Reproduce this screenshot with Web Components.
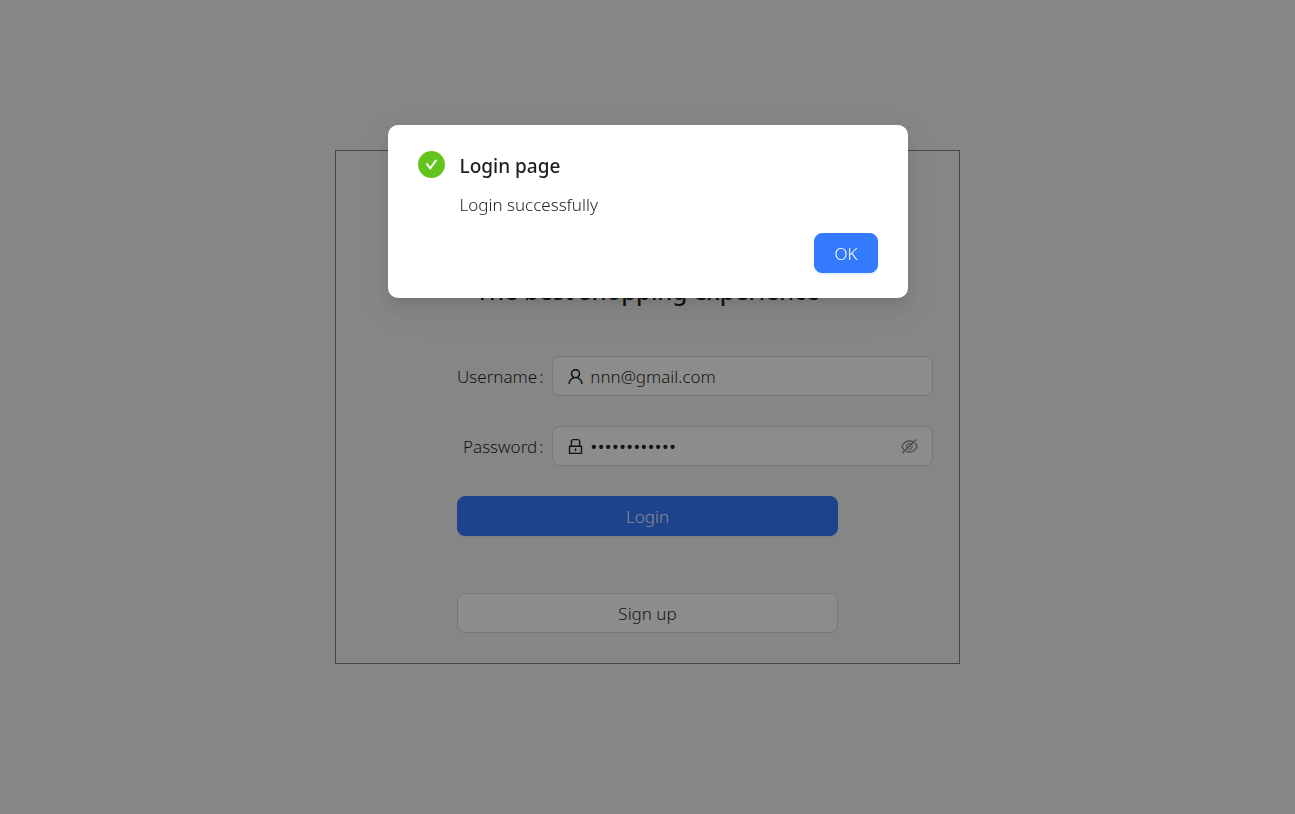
<!DOCTYPE html>
<html lang="en">
<head>
<meta charset="utf-8">
<meta name="viewport" content="width=device-width, initial-scale=1">
<title>Login page</title>
<style>
  body {
    margin: 0;
    background: #f5f5f5;
    color: rgba(0, 0, 0, 0.88);
    font: 300 17px/28px "Noto Sans", "Open Sans", sans-serif;
    --primary: #337aff;
    --line: #d9d9d9;
    --success: #62c41c;
  }
</style>
</head>
<body>
<login-page></login-page>

<script>
const ICONS = {
  user: '<path d="M858.5 763.6a374 374 0 00-80.6-119.5 375.63 375.63 0 00-119.5-80.6c-.4-.2-.8-.3-1.2-.5C719.5 518 760 444.7 760 362c0-137-111-248-248-248S264 225 264 362c0 82.7 40.5 156 102.8 201.1-.4.2-.8.3-1.2.5-44.8 18.9-85 46-119.5 80.6a375.63 375.63 0 00-80.6 119.5A371.7 371.7 0 00136 901.8a8 8 0 008 8.2h60c4.4 0 7.9-3.5 8-7.8 2-77.2 33-149.5 87.8-204.3 56.7-56.7 132-87.9 212.2-87.9s155.5 31.2 212.2 87.9C779 752.7 810 825 812 902.2c.1 4.4 3.6 7.8 8 7.8h60a8 8 0 008-8.2c-1-47.8-10.9-94.3-29.5-138.2zM512 534c-45.9 0-89.1-17.9-121.6-50.4S340 407.9 340 362c0-45.9 17.9-89.1 50.4-121.6S466.1 190 512 190s89.1 17.9 121.6 50.4S684 316.1 684 362c0 45.9-17.9 89.1-50.4 121.6S557.9 534 512 534z"/>',
  lock: '<path d="M832 464h-68V240c0-70.7-57.3-128-128-128H388c-70.7 0-128 57.3-128 128v224h-68c-17.7 0-32 14.3-32 32v384c0 17.7 14.3 32 32 32h640c17.7 0 32-14.3 32-32V496c0-17.7-14.3-32-32-32zM332 240c0-30.9 25.1-56 56-56h248c30.9 0 56 25.1 56 56v224H332V240zm460 600H232V536h560v304zM484 701v53c0 4.4 3.6 8 8 8h40c4.4 0 8-3.6 8-8v-53a48.01 48.01 0 10-56 0z"/>',
  'eye-off': '<path d="M942.2 486.2Q889.47 375.11 816.7 305l-50.88 50.88C807.31 395.53 843.45 447.4 874.7 512 791.5 684.2 673.4 766 512 766q-72.67 0-133.87-22.38L323 798.75Q408 838 512 838q288.3 0 430.2-300.3a60.29 60.29 0 000-51.5zm-63.57-320.64L836 122.88a8 8 0 00-11.32 0L715.31 232.2Q624.86 186 512 186q-288.3 0-430.2 300.3a60.3 60.3 0 000 51.5q56.69 119.4 136.5 191.41L112.48 835a8 8 0 000 11.31L155.17 889a8 8 0 0011.31 0l712.15-712.12a8 8 0 000-11.32zM149.3 512C232.6 339.8 350.7 258 512 258c54.54 0 104.13 9.36 149.12 28.39l-70.3 70.3a176 176 0 00-238.13 238.13l-83.42 83.42C223.1 637.49 183.3 582.28 149.3 512zm246.7 0a112.11 112.11 0 01146.2-106.69L401.31 546.2A112 112 0 01396 512z"/><path d="M508 624c-3.46 0-6.87-.16-10.25-.47l-52.82 52.82a176.09 176.09 0 00227.42-227.42l-52.82 52.82c.31 3.38.47 6.79.47 10.25a111.94 111.94 0 01-112 112z"/>',
  success: '<path d="M512 64C264.6 64 64 264.6 64 512s200.6 448 448 448 448-200.6 448-448S759.4 64 512 64zm193.5 301.7l-210.6 292a31.8 31.8 0 01-51.7 0L318.5 484.9c-3.8-5.3 0-12.7 6.5-12.7h46.9c10.2 0 19.9 4.9 25.9 13.3l71.2 98.8 157.2-218c6-8.3 15.6-13.3 25.9-13.3H699c6.5 0 10.3 7.4 6.5 12.7z"/>'
};

function define(name, render, setup) {
  customElements.define(name, class extends HTMLElement {
    constructor() {
      super();
      this.attachShadow({ mode: 'open' });
    }
    connectedCallback() {
      this.shadowRoot.innerHTML = render(this);
      if (setup) setup(this, this.shadowRoot);
    }
  });
}

define('ui-icon', el => `
  <style>
    :host { display: block; flex: none; width: 17px; height: 17px; }
    svg { display: block; width: 100%; height: 100%; fill: currentColor; }
  </style>
  <svg viewBox="64 64 896 896" aria-hidden="true">${ICONS[el.getAttribute('name')]}</svg>`);

define('ui-button', () => `
  <style>
    :host { display: block; }
    button {
      display: block;
      box-sizing: border-box;
      width: 100%;
      height: 40px;
      padding: 2px 19px 0;
      border: 1px solid var(--line);
      border-radius: 8px;
      background: #fff;
      color: inherit;
      font: inherit;
      box-shadow: 0 2px 0 rgba(0, 0, 0, 0.02);
      cursor: pointer;
    }
    :host([primary]) button {
      border-color: var(--primary);
      background: var(--primary);
      color: #fff;
      box-shadow: 0 2px 0 rgba(5, 145, 255, 0.1);
    }
  </style>
  <button type="button"><slot></slot></button>`);

define('form-field', el => {
  const secret = el.getAttribute('type') === 'password';
  return `
  <style>
    :host { display: grid; grid-template-columns: 1fr 2fr; align-items: center; }
    label { justify-self: end; padding: 2px 9px 0 0; }
    .colon { margin-left: 2px; }
    .box {
      display: flex;
      align-items: center;
      gap: 6px;
      box-sizing: border-box;
      height: 40px;
      padding: 0 14px;
      border: 1px solid var(--line);
      border-radius: 8px;
      background: #fff;
    }
    input {
      flex: 1;
      min-width: 0;
      padding: 2px 0 0;
      border: 0;
      outline: 0;
      background: none;
      color: inherit;
      font: inherit;
    }
    input[type="password"] { font-family: "Open Sans", sans-serif; font-size: 19px; font-weight: 400; }
    button {
      padding: 0;
      border: 0;
      background: none;
      color: rgba(0, 0, 0, 0.45);
      cursor: pointer;
    }
  </style>
  <label for="value">${el.getAttribute('label')}<span class="colon">:</span></label>
  <div class="box">
    <ui-icon name="${el.getAttribute('icon')}"></ui-icon>
    <input id="value" type="${secret ? 'password' : 'text'}" value="${el.getAttribute('value')}">
    ${secret ? '<button type="button" aria-label="Show password"><ui-icon name="eye-off"></ui-icon></button>' : ''}
  </div>`;
}, (el, root) => {
  const toggle = root.querySelector('button');
  if (!toggle) return;
  const input = root.querySelector('input');
  toggle.addEventListener('click', () => {
    input.type = input.type === 'password' ? 'text' : 'password';
  });
});

define('login-card', () => `
  <style>
    :host {
      display: block;
      box-sizing: border-box;
      width: 100%;
      max-width: 625px;
      padding: 120px 26px 30px;
      border: 1px solid #808080;
    }
    h1 {
      margin: 0 0 45px;
      font-size: 24px;
      font-weight: 500;
      line-height: 40px;
      text-align: center;
    }
    form { display: grid; gap: 30px; }
    .action { width: calc(100% * 2 / 3); justify-self: center; }
    .signup { margin-top: 27px; }
  </style>
  <h1>The best shopping experience</h1>
  <form>
    <form-field label="Username" icon="user" value="nnn@gmail.com"></form-field>
    <form-field label="Password" icon="lock" type="password" value="abcdefghijkl"></form-field>
    <ui-button class="action" primary>Login</ui-button>
    <ui-button class="action signup">Sign up</ui-button>
  </form>`);

define('success-modal', el => `
  <style>
    :host {
      position: fixed;
      inset: 0;
      display: flex;
      justify-content: center;
      align-items: flex-start;
      padding: 125px 16px 0;
      background: rgba(0, 0, 0, 0.45);
    }
    :host([hidden]) { display: none; }
    section {
      box-sizing: border-box;
      width: 100%;
      max-width: 520px;
      padding: 25px 30px;
      border-radius: 10px;
      background: #fff;
      box-shadow: 0 8px 20px rgba(0, 0, 0, 0.08), 0 4px 8px -5px rgba(0, 0, 0, 0.12), 0 11px 35px 10px rgba(0, 0, 0, 0.05);
    }
    header { display: flex; align-items: flex-start; gap: 15px; }
    header ui-icon { width: 27px; height: 27px; margin-top: 1px; color: var(--success); }
    h2 { margin: 0; padding-top: 1px; font-size: 19px; font-weight: 500; line-height: 30px; }
    .text { margin: 10px 0 14px 42px; }
    footer { display: flex; justify-content: flex-end; }
  </style>
  <section role="dialog" aria-modal="true" aria-labelledby="title">
    <header><ui-icon name="success"></ui-icon><h2 id="title">${el.getAttribute('heading')}</h2></header>
    <div class="text"><slot></slot></div>
    <footer><ui-button primary>OK</ui-button></footer>
  </section>`, (el, root) => {
  root.querySelector('ui-button').addEventListener('click', () => { el.hidden = true; });
});

define('login-page', () => `
  <style>
    :host {
      display: flex;
      align-items: center;
      justify-content: center;
      min-height: 100vh;
    }
  </style>
  <login-card></login-card>
  <success-modal heading="Login page">Login successfully</success-modal>`);
</script>
</body>
</html>
